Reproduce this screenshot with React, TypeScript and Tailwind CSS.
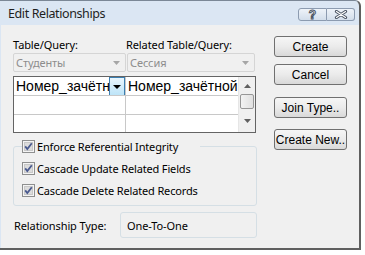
import React from "react";

const ui = { fontFamily: '"Noto Sans", "Open Sans", sans-serif' };
const ms = { fontFamily: '"Liberation Sans", Arial, sans-serif' };

function Check({ label }: { label: string }) {
  return (
    <div className="flex items-center h-[22px] bg-[#f0f0f0] pr-[2px]">
      <svg width="13" height="13" viewBox="0 0 13 13" className="shrink-0">
        <rect x="0.5" y="0.5" width="12" height="12" fill="#f4f4f4" stroke="#8e8f8f" />
        <rect x="2.5" y="2.5" width="8" height="8" fill="#dcdcdc" stroke="#c8c8c8" />
        <path d="M3.2 6.4 L5.3 9 L9.8 3.2" fill="none" stroke="#4a5a8f" strokeWidth="1.8" />
      </svg>
      <span className="ml-[2px] text-[11px] tracking-[-0.15px] text-black leading-none">{label}</span>
    </div>
  );
}

function Btn({ label, className = "" }: { label: string; className?: string }) {
  return (
    <div
      className={`w-[73px] h-[21px] rounded-[3px] border border-[#707070] bg-gradient-to-b from-[#f6f6f6] via-[#ebebeb] to-[#d9d9d9] flex items-center justify-center text-[12px] text-black ${className}`}
      style={ms}
    >
      {label}
    </div>
  );
}

function Combo({ text, w }: { text: string; w: string }) {
  return (
    <div className={`${w} h-[19px] rounded-[2px] border border-[#d5d5d5] bg-[#f0f0f0] flex items-center pl-[2px] pr-[5px]`}>
      <span className="flex-1 text-[11px] tracking-[-0.1px] text-[#8d8d8d] leading-none">{text}</span>
      <svg width="7" height="4" viewBox="0 0 7 4">
        <path d="M0 0 H7 L3.5 4 Z" fill="#a6a6a6" />
      </svg>
    </div>
  );
}

export default function App() {
  return (
    <div className="w-[365px] h-[255px] bg-white overflow-hidden" style={ui}>
      <div className="w-[361px] h-[250px] flex flex-col border-t border-[#7b8796] border-r-2 border-r-[#5f5f5f] border-b-2 border-b-[#5f5f5f] bg-[#dbe6f3] rounded-tr-[6px]">
        {/* title bar */}
        <div className="h-[24px] flex items-center pl-[8px] pr-[4px] pt-[3px]">
          <span className="flex-1 text-[12.5px] tracking-[-0.4px] text-[#1e1e1e] leading-none">Edit Relationships</span>
          <div className="flex">
            <div className="w-[29px] h-[13px] border border-[#8c9bb0] rounded-l-[3px] bg-gradient-to-b from-[#eef3f9] to-[#d3deeb] flex items-center justify-center">
              <span className="text-[12px] leading-none text-white font-bold [-webkit-text-stroke:1px_#4a5463]" style={ms}>?</span>
            </div>
            <div className="w-[28px] h-[13px] border border-l-0 border-[#8c9bb0] rounded-r-[3px] bg-gradient-to-b from-[#eef3f9] to-[#d3deeb] flex items-center justify-center">
              <svg width="14" height="9" viewBox="0 0 14 9">
                <path d="M2.5 1.5 L11.5 7.5 M11.5 1.5 L2.5 7.5" stroke="#4a5463" strokeWidth="3.2" strokeLinecap="round" />
                <path d="M2.5 1.5 L11.5 7.5 M11.5 1.5 L2.5 7.5" stroke="#ffffff" strokeWidth="1.2" strokeLinecap="round" />
              </svg>
            </div>
          </div>
        </div>
        {/* body */}
        <div className="flex-1 bg-[#f0f0f0] ml-[1px] flex pl-[12px] pt-[11px]">
          {/* left column */}
          <div className="w-[244px] flex flex-col">
            <div className="flex h-[16px] items-center text-[11px] tracking-[-0.1px] text-black leading-none">
              <span className="w-[113px]">Table/Query:</span>
              <span>Related Table/Query:</span>
            </div>
            <div className="flex mt-[1px] gap-[1px]">
              <Combo text="Студенты" w="w-[113px]" />
              <Combo text="Сессия" w="w-[128px]" />
            </div>
            {/* grid */}
            <div className="mt-[4px] w-[243px] h-[57px] border border-[#646464] bg-white flex">
              <div className="flex-1 flex flex-col">
                <div className="h-[19px] flex border-b border-[#c8c8c8]">
                  <div className="w-[112px] border-r border-[#c8c8c8] flex items-center overflow-hidden relative">
                    <span className="text-[14px] text-black whitespace-nowrap pl-[2px] leading-none" style={ms}>Номер_зачётной</span>
                    <div className="absolute right-0 top-0 w-[16px] h-[19px] border border-[#3c7fb1] bg-gradient-to-b from-[#eaf6fd] to-[#bde4f8] flex items-center justify-center">
                      <svg width="8" height="4" viewBox="0 0 8 4">
                        <path d="M0 0 H8 L4 4 Z" fill="#000" />
                      </svg>
                    </div>
                  </div>
                  <div className="flex-1 flex items-center overflow-hidden">
                    <span className="text-[14px] text-black whitespace-nowrap pl-[2px] leading-none" style={ms}>Номер_зачётной</span>
                  </div>
                </div>
                <div className="h-[19px] flex border-b border-[#c8c8c8]">
                  <div className="w-[112px] border-r border-[#c8c8c8]" />
                  <div className="flex-1" />
                </div>
                <div className="flex-1 flex">
                  <div className="w-[112px] border-r border-[#c8c8c8]" />
                  <div className="flex-1" />
                </div>
              </div>
              {/* scrollbar */}
              <div className="w-[17px] bg-[#f0f0f0] border-l border-[#e6e6e6] flex flex-col items-center">
                <div className="h-[17px] flex items-center justify-center">
                  <svg width="7" height="4" viewBox="0 0 7 4">
                    <path d="M0 4 H7 L3.5 0 Z" fill="#606060" />
                  </svg>
                </div>
                <div className="w-[14px] h-[15px] rounded-[2px] border border-[#979797] bg-gradient-to-r from-[#f3f3f3] to-[#e0e0e0]" />
                <div className="flex-1 flex items-center justify-center">
                  <svg width="7" height="4" viewBox="0 0 7 4">
                    <path d="M0 0 H7 L3.5 4 Z" fill="#606060" />
                  </svg>
                </div>
              </div>
            </div>
            {/* group box */}
            <div className="mt-[13px] w-[244px] h-[60px] border border-[#d5dfe5] rounded-[3px] relative">
              <div className="absolute left-[8px] top-[-12px] flex flex-col">
                <Check label="Enforce Referential Integrity" />
                <Check label="Cascade Update Related Fields" />
                <Check label="Cascade Delete Related Records" />
              </div>
            </div>
            {/* relationship type */}
            <div className="mt-[6px] flex items-center">
              <span className="w-[107px] pl-[1px] text-[11px] tracking-[-0.1px] text-black leading-none">Relationship Type:</span>
              <div className="w-[137px] h-[26px] border border-[#d5dfe5] rounded-[3px] flex items-center pl-[6px]">
                <span className="text-[11px] tracking-[-0.1px] text-black leading-none">One-To-One</span>
              </div>
            </div>
          </div>
          {/* right buttons */}
          <div className="ml-[17px] flex flex-col">
            <Btn label="Create" />
            <Btn label="Cancel" className="mt-[7px]" />
            <Btn label="Join Type.." className="mt-[12px]" />
            <Btn label="Create New.." className="mt-[11px]" />
          </div>
        </div>
      </div>
    </div>
  );
}
